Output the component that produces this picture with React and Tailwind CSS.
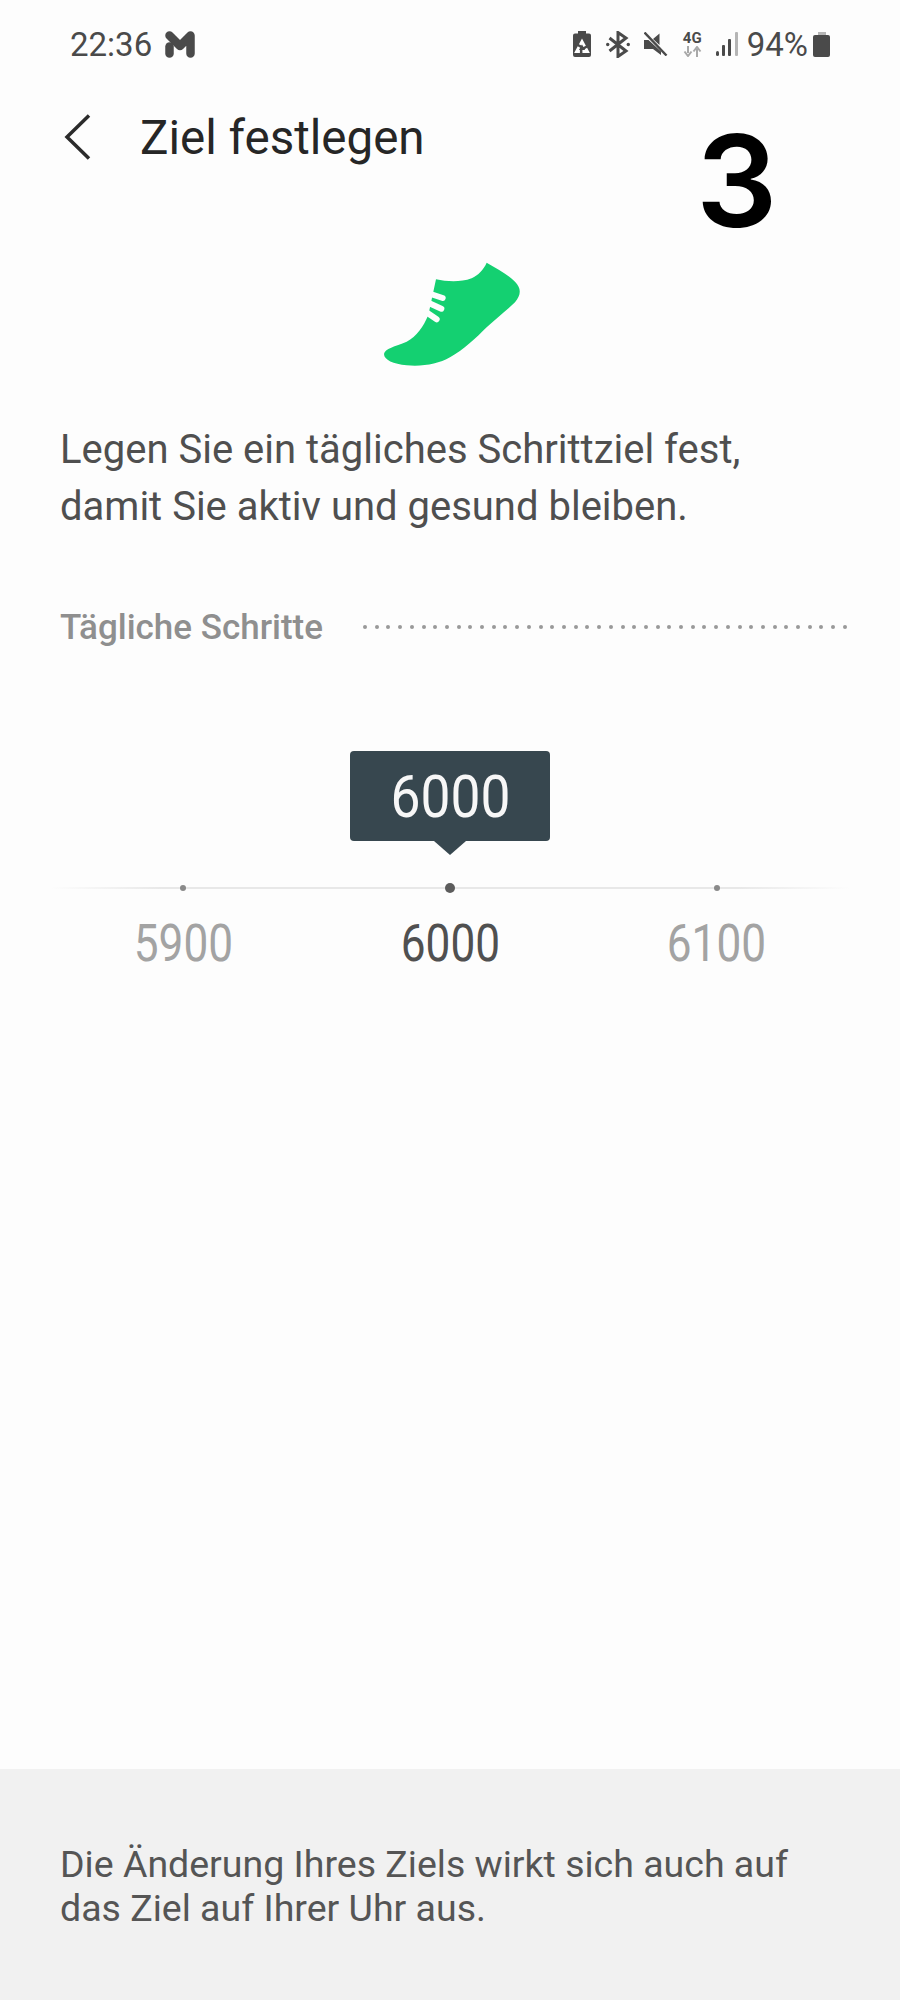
import React from 'react';

const roboto = 'font-["Roboto",sans-serif]';

function MailIcon() {
  return (
    <svg width="30" height="27" viewBox="0 0 30 27" className="ml-[13px]">
      <path d="M4.500 4.500 15 15 25.500 4.500V22.500" stroke="#4a4a4a" strokeWidth="8.500" strokeLinecap="round" strokeLinejoin="round" fill="none" />
      <path d="M4.500 15.500V22.500" stroke="#4a4a4a" strokeWidth="8.500" strokeLinecap="round" fill="none" />
    </svg>
  );
}

function RecycleBattery() {
  return (
    <svg width="18" height="26" viewBox="0 0 18 26">
      <path d="M5 0h8v2.500h3a2 2 0 0 1 2 2V24a2 2 0 0 1-2 2H2a2 2 0 0 1-2-2V4.500a2 2 0 0 1 2-2h3V0Z" fill="#4a4a4a" />
      <path d="M9 10.500 14.500 20.500H3.500Z" stroke="#fff" strokeWidth="2.800" strokeDasharray="8.500 2.500" strokeDashoffset="3" fill="none" />
    </svg>
  );
}

function BluetoothIcon() {
  return (
    <svg width="24" height="27" viewBox="0 0 24 27">
      <path d="M3.500 7 20 20l-8 5.500V1.500L20 7 3.500 20" stroke="#4a4a4a" strokeWidth="3" fill="none" />
      <circle cx="1.700" cy="13.500" r="1.700" fill="#4a4a4a" />
      <circle cx="22.300" cy="13.500" r="1.700" fill="#4a4a4a" />
    </svg>
  );
}

function MuteIcon() {
  return (
    <svg width="24" height="24" viewBox="0 0 24 24">
      <path d="M0 8H4.500L17 19.500V23L9 17H0V8ZM9 7 15.500 1.500V13Z" fill="#4a4a4a" />
      <path d="M.500.500 22.500 23.500" stroke="#4a4a4a" strokeWidth="2.400" />
    </svg>
  );
}

function NetworkIcon() {
  return (
    <div className="flex w-[23px] flex-col items-center">
      <span className={`${roboto} text-[15px] leading-[14px] font-bold text-[#4a4a4a]`}>4G</span>
      <svg width="19" height="11" viewBox="0 0 19 11" className="mt-[1px]">
        <path d="M5 0v7M1.500 5.500 5 10l3.500-4.500" stroke="#a8a8a8" strokeWidth="2" fill="none" />
        <path d="M14 11V3M10.500 5.500 14 1l3.500 4.500" stroke="#a8a8a8" strokeWidth="2" fill="none" />
      </svg>
    </div>
  );
}

function SignalIcon() {
  return (
    <svg width="22" height="24" viewBox="0 0 22 24">
      <rect x="0" y="19" width="3" height="5" rx="1.500" fill="#4a4a4a" />
      <rect x="6" y="13" width="3" height="11" rx="1" fill="#4a4a4a" />
      <rect x="12" y="7" width="3" height="17" rx="1" fill="#4a4a4a" />
      <rect x="19" y="0" width="3" height="24" rx="1" fill="#b5b5b5" />
    </svg>
  );
}

function BatteryIcon() {
  return (
    <div className="flex w-[17px] flex-col items-center">
      <div className="h-[3px] w-[8px] bg-[#b5b5b5]" />
      <div className="h-[22px] w-[17px] rounded-[2px] bg-[#4a4a4a]" />
    </div>
  );
}

function Shoe() {
  return (
    <svg width="180" height="140" viewBox="0 0 540 420" className="mx-auto mt-[52px] block">
      <path
        d="M380 68C410 85 445 105 465 125C485 145 483 165 465 187C435 215 405 238 380 262C350 292 310 330 270 352C235 372 190 380 140 376C100 372 72 360 72 342C74 325 105 320 140 305C170 290 190 260 205 225L228 118C260 125 300 128 335 115C355 105 370 90 380 68Z"
        fill="#14d071"
      />
      <path d="M212 162 248 174M208 190 244 206M198 216 230 238" stroke="#fdfdfd" strokeWidth="18" strokeLinecap="round" fill="none" />
    </svg>
  );
}

export default function App() {
  const dots = Array.from({ length: 42 });

  return (
    <div className={`${roboto} relative flex h-[2000px] w-[900px] flex-col overflow-hidden bg-[#fdfdfd]`}>
      <div className="flex h-[88px] items-center pr-[70px] pl-[70px]">
        <span className="text-[33px] leading-none text-[#4a4a4a]">22:36</span>
        <MailIcon />
        <div className="ml-auto flex items-center">
          <RecycleBattery />
          <div className="ml-[15px]"><BluetoothIcon /></div>
          <div className="ml-[14px]"><MuteIcon /></div>
          <div className="ml-[13px]"><NetworkIcon /></div>
          <div className="ml-[12px]"><SignalIcon /></div>
          <span className="ml-[9px] text-[33px] leading-none text-[#4a4a4a]">94%</span>
          <div className="ml-[5px]"><BatteryIcon /></div>
        </div>
      </div>

      <div className="flex h-[100px] items-center pl-[64px]">
        <svg width="28" height="46" viewBox="0 0 28 46" className="-mt-[2px]">
          <path d="M25 1.500 3 23l22 21.500" stroke="#2b2b2b" strokeWidth="3.500" fill="none" />
        </svg>
        <h1 className="mt-[2px] ml-[48px] text-[47.500px] leading-none font-normal text-[#262626]">Ziel festlegen</h1>
      </div>

      <Shoe />

      <p className="mt-[41px] px-[60px] text-[40px] leading-[57px] text-[#4f4f4f]">
        Legen Sie ein tägliches Schrittziel fest,
        <br />
        damit Sie aktiv und gesund bleiben.
      </p>

      <div className="mt-[72px] flex h-[40px] items-center pr-[53px] pl-[60px]">
        <span className="text-[35px] leading-none font-medium text-[#8f8f8f]">Tägliche Schritte</span>
        <div className="ml-[40px] flex flex-1 justify-between">
          {dots.map((_, i) => (
            <span key={i} className="h-[4px] w-[4px] rounded-full bg-[#999999]" />
          ))}
        </div>
      </div>

      <div className="mt-[104px] flex flex-col items-center">
        <div className="flex h-[90px] w-[200px] items-center justify-center rounded-[4px] bg-[#37474f] pt-[2px] text-[60px] leading-none text-[#f7f7f7]">
          <span className="inline-block scale-x-[.89]">6000</span>
        </div>
        <div className="h-[14px] w-[32px] bg-[#37474f] [clip-path:polygon(0_0,100%_0,50%_100%)]" />
      </div>

      <div className="mx-[50px] mt-[27px] grid h-[12px] grid-cols-3 items-center justify-items-center bg-[linear-gradient(90deg,#fdfdfd_0%,#e8e8e8_14%,#e8e8e8_86%,#fdfdfd_100%)] bg-[length:100%_2px] bg-center bg-no-repeat">
        <span className="h-[6px] w-[6px] rounded-full bg-[#8a8a8a]" />
        <span className="h-[10px] w-[10px] rounded-full bg-[#5c5c5c]" />
        <span className="h-[6px] w-[6px] rounded-full bg-[#8a8a8a]" />
      </div>

      <div className="mx-[50px] mt-[20px] grid grid-cols-3 justify-items-center text-[52px] leading-[60px]">
        <span className="inline-block scale-x-[.85] text-[#a3a3a3]">5900</span>
        <span className="inline-block scale-x-[.85] text-[#505050]">6000</span>
        <span className="inline-block scale-x-[.85] text-[#a3a3a3]">6100</span>
      </div>

      <div className="flex-1" />

      <div className="h-[231px] bg-[#f1f1f1] px-[60px] pt-[73px] text-[37.500px] leading-[44px] text-[#555555]">
        Die Änderung Ihres Ziels wirkt sich auch auf
        <br />
        das Ziel auf Ihrer Uhr aus.
      </div>

      <span className='absolute top-[111px] left-[696px] font-["Inter",sans-serif] text-[128px] leading-[140px] font-semibold text-black'>3</span>
    </div>
  );
}
